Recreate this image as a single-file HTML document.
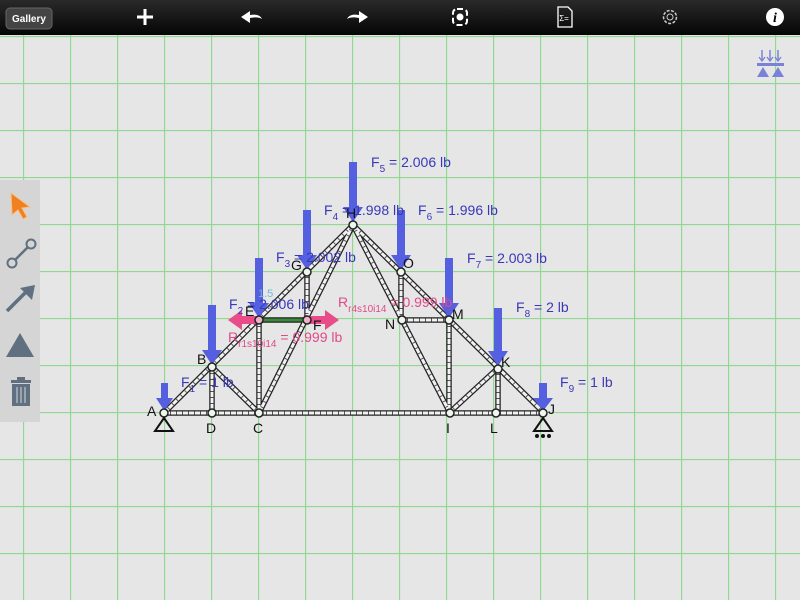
<!DOCTYPE html>
<html><head><meta charset="utf-8"><style>
html,body{margin:0;padding:0;width:800px;height:600px;overflow:hidden;background:#e6e6e6;font-family:"Liberation Sans",sans-serif}
</style></head><body>
<svg width="800" height="600" viewBox="0 0 800 600" xmlns="http://www.w3.org/2000/svg" style="position:absolute;left:0;top:0">
<defs>
<pattern id="g" x="23" y="36" width="47" height="47" patternUnits="userSpaceOnUse">
<path d="M0.5 0V47M0 0.5H47" stroke="#8fd88f" stroke-width="1.3" fill="none"/>
</pattern>
<linearGradient id="tb" x1="0" y1="0" x2="0" y2="1"><stop offset="0" stop-color="#2a2a2a"/><stop offset="1" stop-color="#050505"/></linearGradient>
</defs>
<rect x="0" y="0" width="800" height="600" fill="#e6e6e6"/>
<rect x="0" y="35" width="800" height="565" fill="url(#g)"/>
<rect x="0" y="0" width="800" height="35" fill="url(#tb)"/>
<rect x="6" y="8" width="46" height="21" rx="4" fill="#444" stroke="#666"/>
<text x="29" y="22" font-size="10" fill="#fff" text-anchor="middle" font-weight="bold">Gallery</text>
<path d="M145 9v16M137 17h16" stroke="#fff" stroke-width="3"/>
<path d="M241 17l9-6v4c6-1 10 0 12 4-3-2-7-2-12-1v5z" fill="#fff"/>
<path d="M368 17l-9-6v4c-6-1-10 0-12 4 3-2 7-2 12-1v5z" fill="#fff"/>
<rect x="453" y="9" width="14" height="16" rx="4" fill="none" stroke="#fff" stroke-width="2" stroke-dasharray="6 3"/>
<circle cx="460" cy="17" r="3.5" fill="#fff"/>
<path d="M558 7h10l4 4v16h-14z" fill="none" stroke="#fff" stroke-width="1.3"/>
<text x="564" y="21" font-size="8" fill="#fff" text-anchor="middle">Σ=</text>
<circle cx="670" cy="17" r="6.5" fill="none" stroke="#ccc" stroke-width="1.5" stroke-dasharray="3 1.5"/>
<circle cx="670" cy="17" r="3" fill="none" stroke="#ccc" stroke-width="1"/>
<circle cx="775" cy="17" r="9" fill="#fff"/>
<text x="775" y="22" font-size="14" fill="#000" text-anchor="middle" font-style="italic" font-weight="bold" font-family="Liberation Serif">i</text>
<g fill="#7a82d8" stroke="#7a82d8">
<path d="M762 50v10M770 50v10M778 50v10" stroke-width="1.5"/>
<path d="M759 57l3 4 3-4M767 57l3 4 3-4M775 57l3 4 3-4" fill="none" stroke-width="1.3"/>
<rect x="757" y="63" width="27" height="3" stroke="none"/>
<path d="M763 67l6 10h-12zM778 67l6 10h-12z" stroke="none"/>
</g>
<rect x="0" y="180" width="40" height="242" fill="#d5d5d5"/>
<path d="M11 193l19 14-8 1 5 9-4 2-5-9-6 5z" fill="#f08020" stroke="#f7c08a" stroke-width="1"/>
<path d="M12 263l18-18" stroke="#607080" stroke-width="2.5"/>
<circle cx="12" cy="263" r="4.5" fill="#d5d5d5" stroke="#607080" stroke-width="2"/>
<circle cx="31" cy="244" r="4.5" fill="#d5d5d5" stroke="#607080" stroke-width="2"/>
<path d="M7 311l22-22" stroke="#607080" stroke-width="3.5"/>
<path d="M35 285l-15 3 12 12z" fill="#607080"/>
<path d="M20 333l14 24h-28z" fill="#607080"/>
<rect x="11" y="380" width="20" height="3" fill="#607080"/>
<rect x="17" y="377" width="8" height="3" fill="#607080"/>
<rect x="12" y="384" width="18" height="22" fill="#607080"/>
<path d="M17 387v16M21 387v16M25 387v16" stroke="#c0c8d0" stroke-width="1.2"/>
<g fill="none" stroke-linecap="round">
<g stroke="#222" stroke-width="5.5">
<path d="M164 413L544 413M164 413L353 225L544 413M212 367V413M212 367L259 413M259 320V413M259 320H307V272M259 413L353 225M353 225L450 413M401 272V320H449V413M449 413L498 368M498 368V413"/>
</g>
<g stroke="#f2f2f2" stroke-width="3">
<path d="M164 413L544 413M164 413L353 225L544 413M212 367V413M212 367L259 413M259 320V413M259 320H307V272M259 413L353 225M353 225L450 413M401 272V320H449V413M449 413L498 368M498 368V413"/>
</g>
<g stroke="#555" stroke-width="3" stroke-dasharray="1 5" stroke-linecap="butt">
<path d="M164 413L544 413M164 413L353 225L544 413M212 367V413M212 367L259 413M259 320V413M307 320V272M259 413L353 225M353 225L450 413M401 272V320H449V413M449 413L498 368M498 368V413"/>
</g>
<path d="M262 320H304" stroke="#3a8a3a" stroke-width="3"/>
</g>
<g fill="#e84d8a">
<rect x="240" y="316" width="19" height="8"/><path d="M228 320l14-10v20z"/>
<rect x="307" y="316" width="20" height="8"/><path d="M339 320l-14-10v20z"/>
</g>
<g fill="#5560e0">
<rect x="161" y="383" width="7" height="18"/><path d="M156 398h17l-8.5 13z"/>
<rect x="208" y="305" width="8" height="48"/><path d="M202 350h20l-10 15z"/>
<rect x="255" y="258" width="8" height="48"/><path d="M249 303h20l-10 15z"/>
<rect x="303" y="210" width="8" height="48"/><path d="M297 255h20l-10 15z"/>
<rect x="349" y="162" width="8" height="48"/><path d="M343 207h20l-10 15z"/>
<rect x="397" y="210" width="8" height="48"/><path d="M391 255h20l-10 15z"/>
<rect x="445" y="258" width="8" height="48"/><path d="M439 303h20l-10 15z"/>
<rect x="494" y="308" width="8" height="46"/><path d="M488 351h20l-10 15z"/>
<rect x="539" y="383" width="8" height="18"/><path d="M533 398h20l-10 13z"/>
</g>
<g fill="#eef6ee" stroke="#222" stroke-width="1.5">
<circle cx="164" cy="413" r="4"/><circle cx="212" cy="413" r="4"/><circle cx="259" cy="413" r="4"/>
<circle cx="212" cy="367" r="4"/><circle cx="307" cy="272" r="4"/><circle cx="353" cy="225" r="4"/>
<circle cx="401" cy="272" r="4"/><circle cx="402" cy="320" r="4"/><circle cx="449" cy="320" r="4"/>
<circle cx="498" cy="369" r="4"/><circle cx="450" cy="413" r="4"/><circle cx="496" cy="413" r="4"/><circle cx="543" cy="413" r="4"/>
</g>
<g fill="#f2b0c8" stroke="#222" stroke-width="1.5">
<circle cx="259" cy="320" r="4"/><circle cx="307" cy="320" r="4"/>
</g>
<path d="M164 418l9 13h-18z" fill="none" stroke="#111" stroke-width="2"/>
<path d="M543 418l9 13h-18z" fill="none" stroke="#111" stroke-width="2"/>
<g fill="#111"><circle cx="537" cy="436" r="2"/><circle cx="543" cy="436" r="2"/><circle cx="549" cy="436" r="2"/></g>
<g font-size="14" fill="#111">
<text x="147" y="416">A</text><text x="206" y="433">D</text><text x="253" y="433">C</text>
<text x="197" y="364">B</text><text x="245" y="316">E</text><text x="313" y="330">F</text>
<text x="291" y="270">G</text><text x="346" y="218">H</text><text x="403" y="268">O</text>
<text x="385" y="329">N</text><text x="452" y="319">M</text><text x="501" y="367">K</text>
<text x="446" y="433">I</text><text x="490" y="433">L</text><text x="548" y="414">J</text>
</g>
<g font-size="14" fill="#3838b8">
<text x="181" y="387">F<tspan font-size="10" dy="5">1</tspan><tspan dy="-5"> = 1 lb</tspan></text>
<text x="229" y="309">F<tspan font-size="10" dy="5">2</tspan><tspan dy="-5">  = 2.006 lb</tspan></text>
<text x="276" y="262">F<tspan font-size="10" dy="5">3</tspan><tspan dy="-5">    = 2.002 lb</tspan></text>
<text x="324" y="215">F<tspan font-size="10" dy="5">4</tspan><tspan dy="-5"> = 1.998 lb</tspan></text>
<text x="371" y="167">F<tspan font-size="10" dy="5">5</tspan><tspan dy="-5"> = 2.006 lb</tspan></text>
<text x="418" y="215">F<tspan font-size="10" dy="5">6</tspan><tspan dy="-5"> = 1.996 lb</tspan></text>
<text x="467" y="263">F<tspan font-size="10" dy="5">7</tspan><tspan dy="-5"> = 2.003 lb</tspan></text>
<text x="516" y="312">F<tspan font-size="10" dy="5">8</tspan><tspan dy="-5"> = 2 lb</tspan></text>
<text x="560" y="387">F<tspan font-size="10" dy="5">9</tspan><tspan dy="-5"> = 1 lb</tspan></text>
</g>
<text x="258" y="297" font-size="11" fill="#70b8e0">1.5</text>
<g font-size="14" fill="#e04a88">
<text x="228" y="342">R<tspan font-size="10" dy="5">r1s10i14</tspan><tspan dy="-5"> = 0.999 lb</tspan></text>
<text x="338" y="307">R<tspan font-size="10" dy="5">r4s10i14</tspan><tspan dy="-5"> = 0.999 lb</tspan></text>
</g>
</svg>
</body></html>
